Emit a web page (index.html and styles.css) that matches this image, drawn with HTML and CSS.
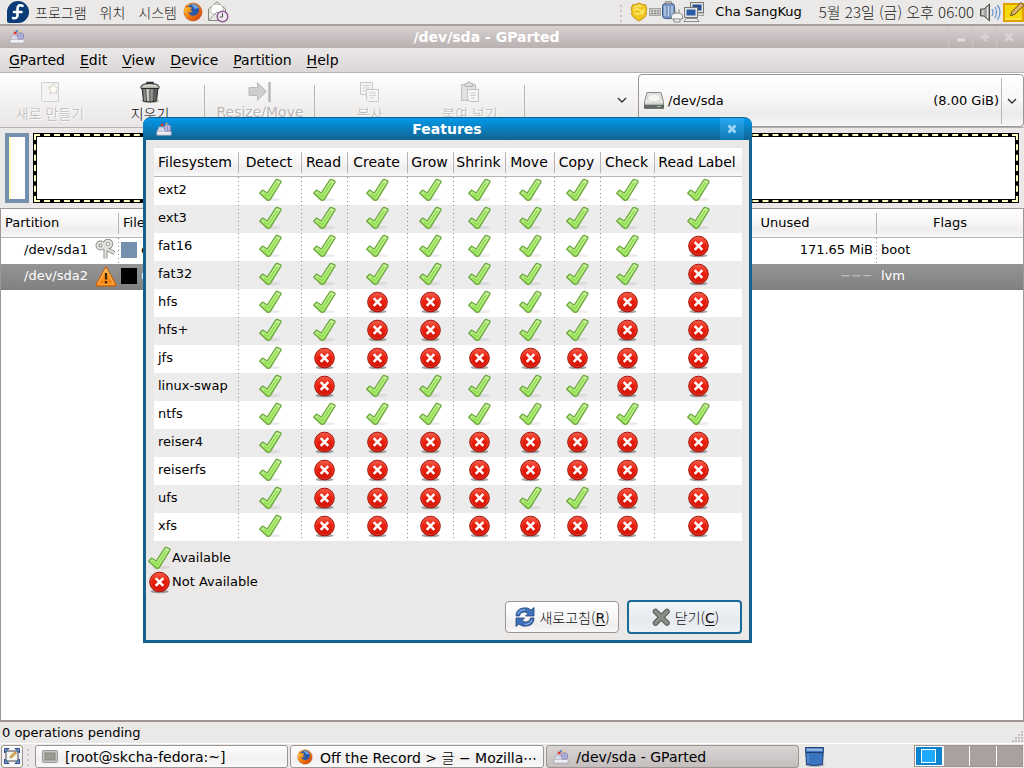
FILE: index.html
```html
<!DOCTYPE html>
<html lang="ko">
<head>
<meta charset="utf-8">
<title>/dev/sda - GParted</title>
<link rel="stylesheet" href="styles.css">
</head>
<body>
<svg class="defs" aria-hidden="true">
  <defs>
    <linearGradient id="gGreen" x1="0" y1="0" x2="0" y2="1"><stop offset="0" stop-color="#c4ee9a"/><stop offset="1" stop-color="#8fdc4f"/></linearGradient>
    <linearGradient id="gRed" x1="0" y1="0" x2="0" y2="1"><stop offset="0" stop-color="#f4604c"/><stop offset=".45" stop-color="#e8200c"/><stop offset="1" stop-color="#d01206"/></linearGradient>
    <linearGradient id="gOrange" x1="0" y1="0" x2="0" y2="1"><stop offset="0" stop-color="#ffb347"/><stop offset="1" stop-color="#f57900"/></linearGradient>
    <linearGradient id="gFlame" x1="0" y1="0" x2="1" y2="1"><stop offset="0" stop-color="#ffd24a"/><stop offset=".45" stop-color="#f58412"/><stop offset="1" stop-color="#cc3a0e"/></linearGradient>
    <linearGradient id="gMetal" x1="0" y1="0" x2="1" y2="0"><stop offset="0" stop-color="#555"/><stop offset=".35" stop-color="#d0d0c8"/><stop offset=".65" stop-color="#8a8a84"/><stop offset="1" stop-color="#444"/></linearGradient>
  </defs>
  <symbol id="yes" viewBox="0 0 24 24">
    <ellipse cx="14" cy="21.5" rx="9" ry="1.8" fill="#000" opacity=".07"/>
    <path d="M1.7 15.2 4.6 12 9.2 15 17.7 2.2Q18.6 1 19.8 1.6L22.5 2.8Q23.4 3.4 22.8 4.4L12.4 21.4Q10.6 23.2 8.8 21.7Z" fill="url(#gGreen)" stroke="#6aa63b" stroke-width="1.2" stroke-linejoin="round"/>
    <path d="M3.8 15.2 5 13.8 9.7 16.8 19.2 3.1 21.2 4 10.9 20.3Z" fill="none" stroke="#d0f3ae" stroke-width=".8"/>
    <path d="M6 16 10.2 18.6 19.4 4.8" fill="none" stroke="#91e14a" stroke-width="1.6"/>
  </symbol>
  <symbol id="no" viewBox="0 0 24 24">
    <ellipse cx="12.500" cy="21.500" rx="9" ry="1.8" fill="#000" opacity=".35"/>
    <circle cx="12.500" cy="12" r="9.8" fill="url(#gRed)" stroke="#a01008"/>
    <circle cx="12.500" cy="12" r="8.700" fill="none" stroke="#f0503c" stroke-width=".8" opacity=".7"/>
    <path d="M8.700 8.200 16.300 15.800M16.300 8.200 8.700 15.800" stroke="#fff" stroke-width="2.500"/>
  </symbol>
  <symbol id="gparted" viewBox="0 0 16 16">
    <path d="M3 6H12L15 11V14H1V11Z" fill="#d9d8e6" stroke="#aaa8b8" stroke-width=".8"/>
    <path d="M1 10.500H15V14H1Z" fill="#f0eff5" stroke="#b0aebb" stroke-width=".7"/>
    <path d="M7.500 5.500 4.500 4.500 5 2.500 7.500 3Z" fill="#e0362c"/><path d="M8 4 6.500 1.500 9 1.200Z" fill="#3568c8"/><path d="M9 4 10.500 1.500 12 3Z" fill="#f2c53a"/>
    <circle cx="11.500" cy="7" r="3.300" fill="#c4c4e8" stroke="#8484b8" stroke-width="1"/><path d="M9 7H14M11.500 4.500V9.500" stroke="#8484b8" stroke-width=".7"/>
  </symbol>
  <symbol id="firefox" viewBox="0 0 20 20">
    <circle cx="10" cy="10" r="9" fill="url(#gFlame)" stroke="#a84a14" stroke-width=".6"/>
    <circle cx="10" cy="8.200" r="6.300" fill="#2a5aa8"/>
    <path d="M8 2.500Q13 1.500 15.500 6L12 7 10 4.500Z" fill="#6ea6e2"/>
    <path d="M1.200 7 3.500 2.500 5 5 9 5.500 7.500 8 9.500 9.500Q7 11.500 5.500 9.500 6.500 15 12 13.500 16 12 16.500 6.500 19.500 12 15.500 16.500 10 20.500 4.500 16.500.5 13 1.200 7Z" fill="url(#gFlame)"/>
    <path d="M2 6 3.500 2.500 5 5Z" fill="#e8681a"/>
  </symbol>
</svg>

<div class="desktop">
  <header class="panel">
    <nav class="panel-menus">
      <svg class="i22" viewBox="0 0 22 22"><path d="M11 0A11 11 0 1 1 11 22H2Q0 22 0 20V11A11 11 0 0 1 11 0Z" fill="#0b3c78"/><path d="M15.500 4.800Q10.500 3 10.500 8V14Q10.500 18 6 17M7 11H14.500" fill="none" stroke="#fff" stroke-width="2.600" stroke-linecap="round"/></svg>
      <a href="#">프로그램</a><a href="#">위치</a><a href="#">시스템</a>
    </nav>
    <svg class="i20" viewBox="0 0 20 20"><use href="#firefox"/></svg>
    <svg class="i22" viewBox="0 0 22 22"><path d="M1.500 8 10 .8 18.500 8V19.500H1.500Z" fill="#e9e9e4" stroke="#85857e"/><path d="M4 7 6 3.500H14L16 7V12L10 14 4 12Z" fill="#fff" stroke="#b5b5ae" stroke-width=".7"/><path d="M1.500 19.500 10 11 14 14" fill="none" stroke="#999" /><circle cx="15.500" cy="15.500" r="5.300" fill="#eee9ee" stroke="#8a5a8e" stroke-width="1.400"/><path d="M15.500 12V16H12.500" fill="none" stroke="#555"/></svg>
    <div class="tray">
      <svg class="grip" viewBox="0 0 4 20"><path d="M2 3V20" stroke="#c8c3c3" stroke-width="2" stroke-dasharray="2 3"/></svg>
      <svg class="i20" viewBox="0 0 20 22"><path d="M3 3Q6 3.500 10 1 14 3.500 17 3L18.500 7Q17.500 10 18 14 16 18 10 21 4 18 2 14 2.500 10 1.500 7Z" fill="#f3c822" stroke="#c08a08"/><path d="M5 6Q9 3 13 5M4 9Q8 6 11 9T16 8M5 12Q10 15 15 11" fill="none" stroke="#fff08a" stroke-width="1.300"/></svg>
      <svg class="kbd" viewBox="0 0 12 10"><rect x=".5" y="1.500" width="11" height="7" fill="#c9c9c6" stroke="#a5a5a0"/><path d="M2 4H10M2 6.500H10" stroke="#777" stroke-dasharray="2 1"/></svg>
      <svg class="i22" viewBox="0 0 22 22"><rect x="1.500" y="2.500" width="12" height="15" rx="3" fill="#7898c4" stroke="#3d5a88"/><rect x="4.500" y=".8" width="6" height="2" fill="#ccc" stroke="#666" stroke-width=".7"/><path d="M4 5V15M7.500 5V15M11 5V15" stroke="#c9d8ee" stroke-width="1.200"/><path d="M14 8V12M18 8V12M10.500 15Q11 12 16 12T21.500 15V18H10.500ZM13 18V21H19V18" fill="#f3f3f1" stroke="#888"/></svg>
      <svg class="i22" viewBox="0 0 22 22"><rect x="7.500" y="1.500" width="13" height="10" fill="#e4e4e0" stroke="#777"/><rect x="9.500" y="3.500" width="9" height="6" fill="#244f92"/><path d="M11 14.500H21L20 12H12Z" fill="#ddd" stroke="#888" stroke-width=".7"/><rect x="1.500" y="6.500" width="13" height="10" fill="#e4e4e0" stroke="#777"/><rect x="3.500" y="8.500" width="9" height="6" fill="#2b5ba8"/><path d="M1 20.500H16L14 17.500H3Z" fill="#eee" stroke="#888"/></svg>
      <span class="user">Cha SangKug</span>
      <time class="clock">5월 23일 (금) 오후 06:00</time>
      <svg class="i22" viewBox="0 0 22 22"><path d="M.5 8H4L9.500 3V20L4 15H.5Z" fill="#a4a4a0" stroke="#4c4c4a"/><path d="M3 9V14M7.500 6V17" stroke="#eee"/><path d="M12 8Q14 11 12 15M15 6Q18 11 15 17M17.500 4Q22.500 11 17.500 19" fill="none" stroke="#6d96cf" stroke-width="1.300"/></svg>
      <svg class="i22" viewBox="0 0 22 22"><rect x="2" y="3" width="19" height="17" fill="#f5d90a" stroke="#e0a000" stroke-width="2"/><path d="M3 18H20" stroke="#fff27a"/><path d="M8.500 14.500 10 10.500 19 1.500 22 4.500 12.500 13.500Z" fill="#e0b36a" stroke="#5d4a22"/></svg>
    </div>
  </header>

  <main class="window">
    <div class="titlebar">
      <svg class="i16" viewBox="0 0 16 16"><use href="#gparted"/></svg>
      <h1>/dev/sda - GParted</h1>
      <button aria-label="Minimize"><svg viewBox="0 0 10 10"><path d="M1 8H9" stroke="#e2dddd" stroke-width="3"/></svg></button>
      <button aria-label="Maximize"><svg viewBox="0 0 10 10"><path d="M5 1V9M1 5H9" stroke="#d8d2d2" stroke-width="3"/></svg></button>
      <button aria-label="Close"><svg viewBox="0 0 10 10"><path d="M1.500 1.500 8.500 8.500M8.500 1.500 1.500 8.500" stroke="#d8d2d2" stroke-width="3"/></svg></button>
    </div>
    <nav class="menubar">
      <a href="#"><u>G</u>Parted</a><a href="#"><u>E</u>dit</a><a href="#"><u>V</u>iew</a><a href="#"><u>D</u>evice</a><a href="#"><u>P</u>artition</a><a href="#"><u>H</u>elp</a>
    </nav>
    <div class="toolbar">
      <button class="tool ko" disabled><svg viewBox="0 0 24 24"><path d="M3.500 2.500H20.500V21.500H5.500L3.500 19.500Z" fill="#f4f3f3" stroke="#d2d0d0"/><path d="M15.500 3 17 7 21 7.500 18 10 19 14 15.500 12 12 14 13 10 10 7.500 14 7Z" fill="#fffdf4" stroke="#d8d4cc"/></svg>새로 만들기</button>
      <button class="tool ko"><svg viewBox="0 0 24 24"><ellipse cx="12" cy="21" rx="9" ry="2" fill="#000" opacity=".25"/><path d="M4 8H20L18.500 21Q12 23 5.500 21Z" fill="url(#gMetal)" stroke="#2b2b2b"/><path d="M7.500 9 8.500 21M12 9V21.500M16.500 9 15.500 21" stroke="#444"/><path d="M3 8.500V6.500Q4 3.500 12 3.500T21 6.500V8.500Z" fill="#b9b9b2" stroke="#2b2b2b"/><path d="M9 4.500V2.500H15V4.500" fill="none" stroke="#333" stroke-width="1.300"/><path d="M6 6Q12 4.500 18 6" fill="none" stroke="#eee"/></svg>지우기</button>
      <i class="sep"></i>
      <button class="tool" disabled><svg viewBox="0 0 24 24"><path d="M1 7.500H9.500V2.500L18.500 11.500 9.500 20.500V15.500H1Z" fill="#cfcece" stroke="#bcbaba"/><path d="M21.500 2V22" stroke="#b9b7b7" stroke-width="2.500"/></svg>Resize/Move</button>
      <i class="sep"></i>
      <button class="tool ko" disabled><svg viewBox="0 0 24 24"><path d="M2.500 2.500H14.500V14.500H2.500Z" fill="#f4f3f3" stroke="#c9c7c7"/><path d="M5 5.500H12M5 8H12M5 10.500H10" stroke="#d3d1d1"/><path d="M8.500 9.500H20.500V21.500H11L8.500 19Z" fill="#f6f5f5" stroke="#c9c7c7"/><path d="M11 13H18M11 15.500H18M12 18H16" stroke="#d3d1d1"/></svg>복사</button>
      <button class="tool ko" disabled><svg viewBox="0 0 24 24"><path d="M3.500 4.500H17.500V20.500H3.500Z" fill="#e3e1e1" stroke="#c0bebe"/><path d="M7 6.500V3.500H9L10 2H12L13 3.500H15V6.500Z" fill="#ddd" stroke="#b5b3b3"/><path d="M9.500 9.500H20.500V21.500H12L9.500 19Z" fill="#f6f5f5" stroke="#c3c1c1"/><path d="M12 13H18M12 15.500H18M13 18H17" stroke="#d0cece"/></svg>붙여 넣기</button>
      <i class="sep"></i>
      <button class="more" aria-label="More"><svg viewBox="0 0 10 6"><path d="M1 1 5 5 9 1" fill="none" stroke="#333" stroke-width="1.400"/></svg></button>
      <button class="device">
        <svg class="i22" viewBox="0 0 22 22"><path d="M4 2.500H18L20.500 12V18.500H1.500V12Z" fill="#e6e6e2" stroke="#888"/><path d="M1 14.500H21V18.500H1Z" fill="#606664"/><path d="M2 14H20" stroke="#bbb"/><ellipse cx="11" cy="8" rx="6.500" ry="4" fill="#f5f5f3" stroke="#d0d0cc"/><path d="M14 16.500H18" stroke="#9c9" /></svg>
        <span>/dev/sda</span><span class="size">(8.00 GiB)</span>
        <svg class="arrow" viewBox="0 0 10 6"><path d="M1 1 5 5 9 1" fill="none" stroke="#333" stroke-width="1.400"/></svg>
      </button>
    </div>
    <div class="disk">
      <div class="part1"></div>
      <div class="part2"><div class="dash"><div class="fill"></div></div></div>
    </div>
    <div class="list">
      <table class="parts">
        <colgroup><col class="c-part"><col class="c-fs"><col class="c-gap"><col class="c-unused"><col class="c-flags"></colgroup>
        <thead><tr><th class="left">Partition</th><th class="left">Filesystem</th><th></th><th>Unused</th><th>Flags</th></tr></thead>
        <tbody>
          <tr><td><div class="name">/dev/sda1<svg class="i22" viewBox="0 0 22 22"><g fill="none" stroke="#8a8a86" stroke-width="4"><circle cx="5.500" cy="6.500" r="3"/><circle cx="13" cy="5" r="3.200"/><path d="M8 8 19.500 14M10.500 8V19.500"/></g><g fill="none" stroke="#e2e2de" stroke-width="2.200"><circle cx="5.500" cy="6.500" r="3"/><circle cx="13" cy="5" r="3.200"/><path d="M8 8 19.500 14M10.500 8V19.500"/></g></svg></div></td><td><div class="fs"><i class="swatch ext"></i>ext3</div></td><td></td><td class="num">171.65 MiB</td><td>boot</td></tr>
          <tr class="selected"><td><div class="name">/dev/sda2<svg class="i22" viewBox="0 0 22 22"><path d="M11 1.500 21 19.500Q21 21 20 21H2Q1 21 1 19.500Z" fill="url(#gOrange)" stroke="#ce5c00" stroke-linejoin="round"/><path d="M11 4 19 19.200H3Z" fill="none" stroke="#ffc777" stroke-width=".8"/><path d="M11 8V14.500M11 16V18.500" stroke="#3b2508" stroke-width="2.200"/></svg></div></td><td><div class="fs"><i class="swatch unk"></i>unknown</div></td><td></td><td class="num dim">−−−</td><td>lvm</td></tr>
        </tbody>
      </table>
    </div>
    <div class="status">0 operations pending
      <svg class="resize" viewBox="0 0 12 12"><g fill="#c2bebe"><path d="M9 0h2v2h-2zM6 3h2v2h-2zM9 3h2v2h-2zM3 6h2v2h-2zM6 6h2v2h-2zM9 6h2v2h-2zM0 9h2v2h-2zM3 9h2v2h-2zM6 9h2v2h-2zM9 9h2v2h-2z"/></g></svg>
    </div>
  </main>

  <footer class="taskbar">
    <button class="show" aria-label="Show desktop"><svg viewBox="0 0 18 18"><rect x="3" y="4" width="12" height="10" fill="#f4f4f0" stroke="#445"/><path d="M1.500 1.500H6L1.500 6ZM16.500 1.500H12L16.500 6ZM1.500 16.500H6L1.500 12ZM16.500 16.500H12L16.500 12Z" fill="#6f9bd2" stroke="#28508c"/><path d="M7 11 8 8.500 12 4.500 13.500 6 9.500 10Z" fill="#e9b33d" stroke="#84602a" stroke-width=".6"/></svg></button>
    <svg class="grip" viewBox="0 0 4 20"><path d="M2 3V20" stroke="#cbc6c6" stroke-width="2" stroke-dasharray="2 3"/></svg>
    <button class="task"><svg class="i16" viewBox="0 0 16 16"><rect x=".5" y="1.500" width="15" height="12" rx="1" fill="#c5c6c0" stroke="#999"/><rect x="3" y="4" width="10" height="7" fill="#9a9c94" stroke="#858780"/></svg><span>[root@skcha-fedora:~]</span></button>
    <button class="task"><svg class="i16" viewBox="0 0 20 20"><use href="#firefox"/></svg><span>Off the Record &gt; <span class="ko-in">글</span> − Mozilla⋯</span></button>
    <button class="task active"><svg class="i16" viewBox="0 0 16 16"><use href="#gparted"/></svg><span>/dev/sda - GParted</span></button>
    <svg class="i22 trash" viewBox="0 0 22 22"><ellipse cx="11" cy="20" rx="10" ry="2" fill="#000" opacity=".2"/><path d="M1.500 2.500H19.500L18.500 19.500Q10.500 21.500 2.500 19.500Z" fill="#3a74c0" stroke="#1e3f74"/><path d="M2.500 3.500H18.500V6H2.500Z" fill="#8fb2de"/><path d="M2 7.500H19" stroke="#1e3f74"/><path d="M4 9V18" stroke="#6d9bd6"/></svg>
    <div class="pager"><i class="on"><b></b></i><i></i><i></i><i></i></div>
  </footer>
</div>

<section class="dialog" role="dialog" aria-labelledby="dlg-title">
  <div class="dialog-title">
    <svg class="i16" viewBox="0 0 16 16"><use href="#gparted"/></svg>
    <h2 id="dlg-title">Features</h2>
    <button aria-label="Close"><svg viewBox="0 0 10 10"><path d="M1.500 1.500 8.500 8.500M8.500 1.500 1.500 8.500" stroke="#9ad4f5" stroke-width="3"/></svg></button>
  </div>
  <div class="dialog-body">
    <table class="features">
      <colgroup><col class="w85"><col class="w63"><col class="w46"><col class="w60"><col class="w46"><col class="w52"><col class="w49"><col class="w46"><col class="w54"><col></colgroup>
      <thead><tr><th>Filesystem</th><th>Detect</th><th>Read</th><th>Create</th><th>Grow</th><th>Shrink</th><th>Move</th><th>Copy</th><th>Check</th><th>Read Label</th></tr></thead>
      <tbody id="rows"></tbody>
    </table>
    <ul class="legend">
      <li><svg class="i24" viewBox="0 0 24 24"><use href="#yes"/></svg>Available</li>
      <li><svg class="i24" viewBox="0 0 24 24"><use href="#no"/></svg>Not Available</li>
    </ul>
    <div class="actions">
      <button><svg class="i22" viewBox="0 0 22 22"><g fill="#3f72b8" stroke="#1f437c" stroke-width=".8"><path d="M2 10Q2 3 9 2 14 1 17 4L20 1.500V10H11.500L14 7.500Q11 5 8 6.500 5.500 8 5.500 10Z"/><path d="M20 12Q20 19 13 20 8 21 5 18L2 20.500V12H10.500L8 14.500Q11 17 14 15.500 16.500 14 16.500 12Z"/></g><path d="M4 8Q6 3.500 11 3.700M18 14Q16 18.500 11 18.300" fill="none" stroke="#9dbde6"/></svg><span>새로고침(<u>R</u>)</span></button>
      <button class="default"><svg class="i22" viewBox="0 0 22 22"><path d="M5.500 5.500 17 17M17 5.500 5.500 17" stroke="#555753" stroke-width="5.500" stroke-linecap="round"/><path d="M5.500 5.500 17 17M17 5.500 5.500 17" stroke="#8b8d88" stroke-width="3.600" stroke-linecap="round"/></svg><span>닫기(<u>C</u>)</span></button>
    </div>
  </div>
</section>
<script src="app.js"></script>
</body>
</html>
```

FILE: app.js
```js
// One digit per feature column: 1 = available, 0 = not available.
const support = [
  ["ext2", "111111111"],
  ["ext3", "111111111"],
  ["fat16", "111111110"],
  ["fat32", "111111110"],
  ["hfs", "110011100"],
  ["hfs+", "110011100"],
  ["jfs", "100000000"],
  ["linux-swap", "101111100"],
  ["ntfs", "111111111"],
  ["reiser4", "100000000"],
  ["reiserfs", "100000000"],
  ["ufs", "100001100"],
  ["xfs", "100000000"]
];

const icon = on =>
  `<td><svg class="i24" viewBox="0 0 24 24" role="img" aria-label="${on ? "Available" : "Not Available"}"><use href="#${on ? "yes" : "no"}"/></svg></td>`;

document.getElementById("rows").innerHTML = support
  .map(([name, flags]) => `<tr><td>${name}</td>${[...flags].map(f => icon(f === "1")).join("")}</tr>`)
  .join("");
```

FILE: styles.css
```css
* { box-sizing: border-box; }
body {
  margin: 0;
  font: 13px/16px "DejaVu Sans", "Noto Sans CJK KR", sans-serif;
  color: #000;
  background: #ebe9e7;
}
button { font: inherit; color: inherit; border: 0; margin: 0; padding: 0; background: none; }
a { color: inherit; text-decoration: none; }
u { text-underline-offset: 2px; }
svg { display: block; flex: none; }
h1, h2 { margin: 0; font-size: 14px; line-height: 16px; font-weight: bold; text-align: center; flex: 1; }
.defs { position: absolute; width: 0; height: 0; }
.i16 { width: 16px; height: 16px; }
.i20 { width: 20px; height: 20px; }
.i22 { width: 22px; height: 22px; }
.i24 { width: 24px; height: 24px; }
.grip { width: 4px; height: 20px; }

.desktop { display: flex; flex-direction: column; min-height: 100vh; }

/* top panel */
.panel { display: flex; align-items: center; height: 24px; padding-left: 7px; gap: 4px; background: #ebe9e7; }
.panel-menus { display: flex; align-items: center; gap: 13px; margin-right: 2px; font: 300 14px/20px "Noto Sans CJK KR", sans-serif; color: #222; }
.panel-menus svg { margin-right: -7px; }
.tray { display: flex; align-items: center; margin-left: auto; }
.tray .grip { margin-right: 6px; }
.kbd { width: 12px; height: 10px; }
.user { margin: 0 17px 0 10px; }
.clock { font: 300 15px/20px "Noto Sans CJK KR", sans-serif; color: #222; margin-right: 6px; }

/* main window */
.window { flex: 1; display: flex; flex-direction: column; }
.titlebar {
  display: flex; align-items: center; height: 24px; padding: 0 4px 0 9px;
  color: #fff; background: linear-gradient(#d8d2d2, #b9b0b0);
  border-top: 2px solid #a89e9e;
}
.titlebar button { display: grid; place-items: center; width: 24px; height: 22px; border-left: 1px solid #c9c2c2; }
.titlebar button svg, .dialog-title button svg { width: 10px; height: 10px; }
.menubar { display: flex; align-items: center; gap: 15px; height: 25px; padding: 0 9px; font-size: 14px; background: linear-gradient(#ebe9e8, #dad7d6); border-bottom: 1px solid #b9b3b3; }

.toolbar { display: flex; height: 54px; background: linear-gradient(#fff, #e8e6e5); }
.tool { display: flex; flex-direction: column; align-items: center; width: 100px; padding-top: 7px; font-size: 14px; white-space: nowrap; }
.tool svg { width: 24px; height: 24px; }
.tool.ko { font: 300 14px/18px "Noto Sans CJK KR", sans-serif; }
.tool:disabled { color: #b9b6b6; text-shadow: 1px 1px #fff; }
.sep { width: 1px; margin: 12px 5px 10px 4px; background: #b9b5b5; }
.more { display: flex; align-items: center; margin: 0 11px 0 auto; }
.more svg, .arrow { width: 10px; height: 6px; }
.device {
  display: flex; align-items: center; width: 386px; height: 53px; margin-top: 1px; padding: 0 6px 0 4px;
  border: 1px solid #9d9494; border-radius: 4px;
  background: linear-gradient(#fff, #f7f6f6 50%, #ecebeb 75%, #f8f7f7);
}
.device .size { margin-left: auto; padding-right: 2px; }
.device > span:nth-of-type(1) { margin-left: 3px; }
.arrow { box-sizing: content-box; padding: 20px 0 20px 5px; border-left: 1px solid #b9b5b5; }

.disk { display: flex; gap: 4px; height: 81px; padding: 5px 5px 5px; border-top: 1px solid #b5afaf; }
.part1 { width: 24px; border: 4px solid #7590ae; background: linear-gradient(90deg, #ffffc0 2px, #fff 2px); }
.part2 { flex: 1; display: flex; padding: 1px; background: #000; }
.dash { flex: 1; display: flex; padding: 1px; border: 2px dashed #ffffc0; }
.fill { flex: 1; background: #fff; }
.part1, .part2 { height: 70px; }

.list { flex: 1; background: #fff; border: 1px solid #9f9595; border-bottom-width: 2px; }
table { border-collapse: separate; border-spacing: 0; table-layout: fixed; width: 100%; }
th { font-weight: normal; padding: 0; background: linear-gradient(#fff, #f7f5f5 50%, #eeecec 75%, #faf9f9); border-bottom: 1px solid #b9b5b5; position: relative; white-space: nowrap; }
th:not(:last-child)::after { content: ""; position: absolute; right: 0; top: 4px; bottom: 3px; width: 1px; background: #b9b5b5; }
td { padding: 0 4px; }
td:not(:last-child) { background-image: repeating-linear-gradient(#888 0 1px, transparent 1px 4px); background-size: 1px 100%; background-position: right top; background-repeat: no-repeat; }
.parts th { height: 29px; }
.parts th.left { text-align: left; padding-left: 4px; }
.parts td { height: 26px; padding-bottom: 2px; overflow: hidden; }
.c-part { width: 118px; } .c-fs { width: 110px; } .c-unused { width: 184px; } .c-flags { width: 146px; }
.name { display: flex; align-items: center; justify-content: flex-end; gap: 7px; margin-right: -2px; }
.fs { display: flex; align-items: center; gap: 4px; margin-left: -2px; }
.swatch { width: 16px; height: 16px; }
.ext { background: #7590ae; }
.unk { background: #000; }
.num { text-align: right; }
.selected { color: #fff; background: linear-gradient(#959595, #808080); }
.dim { color: #c5c5c5; }

.status { display: flex; justify-content: space-between; align-items: center; height: 21px; padding-left: 2px; }
.resize { width: 12px; height: 12px; align-self: flex-end; }

/* bottom panel */
.taskbar { display: flex; align-items: center; gap: 2px; height: 25px; padding: 0 1px; border-top: 1px solid #fff; background: #ebe9e7; }
.taskbar button { height: 23px; border: 1px solid #9d9494; border-radius: 3px; background: linear-gradient(#fff, #f1efef 60%, #fafafa); }
.show { width: 22px; display: grid; place-items: center; }
.show svg { width: 18px; height: 18px; }
.taskbar .grip { margin: 0 3px 0 1px; }
.taskbar .task { display: flex; align-items: center; gap: 7px; flex: 0 1 253px; padding: 2px 6px 0; font-size: 14px; white-space: nowrap; }
.ko-in { font: 300 14px/16px "Noto Sans CJK KR", sans-serif; }
.taskbar .task.active { background: linear-gradient(#d9d4d4, #c5bebe); }
.trash { margin-left: 3px; }
.pager { display: flex; width: 109px; height: 22px; margin-left: auto; border: 1px solid #9d9494; background: #fff; gap: 1px; }
.pager i { flex: 1; background: #a9a09f; }
.pager .on { display: grid; place-items: center; background: #0a84d0; border: 1px solid #fff; }
.pager b { width: 15px; height: 14px; background: #1eaaff; border: 1px solid #fff; }

/* features dialog, floating over the main window */
.dialog { position: absolute; left: 143px; top: 117px; width: 609px; background: #ebe9e7; border: 3px solid #14638f; border-top-width: 1px; border-radius: 8px 8px 0 0; }
.dialog-title { display: flex; align-items: center; height: 22px; margin: 0 -3px; padding: 0 8px 0 13px; color: #fff; border-radius: 7px 7px 0 0; background: linear-gradient(#0398ea, #126390); }
.dialog-title h2 { padding-left: 2px; }
.dialog-title button { display: grid; place-items: center; width: 24px; height: 22px; background: linear-gradient(#28a8f2, #0f78b4); }
.dialog-body { padding: 8px 7px 6px 8px; }
.features tbody tr { background: #fff; }
.features tbody tr:nth-child(even) { background: #ececec; }
.features th { height: 29px; padding-right: 3px; font-size: 14px; }
.features td { height: 28px; padding: 0 5px 2px 3px; }
.features td:first-child { padding-left: 4px; }
.features td svg { margin: 0 auto; }
.w85 { width: 85px; } .w63 { width: 63px; } .w46 { width: 46px; } .w60 { width: 60px; } .w52 { width: 52px; } .w49 { width: 49px; } .w54 { width: 54px; }
.legend { list-style: none; margin: 5px 0 0 -7px; padding: 0; }
.legend li { display: flex; align-items: center; gap: 1px; height: 24px; }
.actions { display: flex; align-items: center; justify-content: flex-end; gap: 8px; margin-top: 6px; height: 34px; }
.actions button { display: flex; align-items: center; justify-content: center; gap: 3px; width: 114px; height: 32px; border: 1px solid #9d9494; border-radius: 4px; font: 300 14px/18px "Noto Sans CJK KR", sans-serif; color: #111; background: linear-gradient(#fff, #f8f7f7 50%, #efeded 75%, #f9f8f8); }
.actions u { font: 14px/18px "DejaVu Sans", sans-serif; }
.actions .default { width: 115px; height: 34px; border: 2px solid #1a6c97; background: linear-gradient(#f3f6f8, #e6eaee 60%, #eef2f5); }
```
